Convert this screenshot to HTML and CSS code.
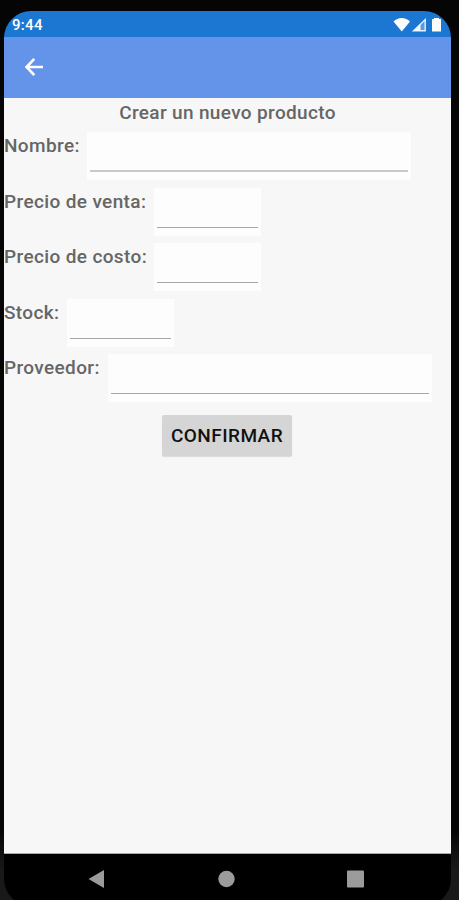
FILE: index.html
```
<!DOCTYPE html>
<html lang="es">
<head>
<meta charset="utf-8">
<title>Crear un nuevo producto</title>
<link rel="stylesheet" href="styles.css">
</head>
<body>
<div class="phone">
  <div class="status">
    <span class="clock">9:44</span>
    <svg class="status-icons" width="50" height="16" viewBox="0 0 50 16">
      <path d="M0.5 4.5 C5 -0.2 12.5 -0.2 17 4.5 L8.8 14.5 Z" fill="#fff"/>
      <path d="M32.2 2.6 V13.8 H20.6 Z" fill="#5a9ae0" stroke="#e8f2fc" stroke-width="1.4"/>
      <path d="M27.5 7 V14 H20.5 Z" fill="#f2f8ff"/>
      <path d="M41 1 h5 v1 h2 v12.5 h-9 v-12.5 h2 z" fill="#fff"/>
    </svg>
  </div>

  <div class="toolbar">
    <svg width="20" height="20" viewBox="0 0 20 20">
      <path d="M10.3 1.8 L2.5 10 L10.3 18.2 M2.5 10 H19" fill="none" stroke="#fff" stroke-width="2.6"/>
    </svg>
  </div>

  <form class="content">
    <h1>Crear un nuevo producto</h1>
    <div class="row">
      <label for="nombre" class="l-nombre">Nombre:</label>
      <div class="field long"><input id="nombre" type="text" class="thick"></div>
    </div>
    <div class="row">
      <label for="venta" class="l-precio">Precio de venta:</label>
      <div class="field"><input id="venta" type="text"></div>
    </div>
    <div class="row">
      <label for="costo" class="l-precio">Precio de costo:</label>
      <div class="field"><input id="costo" type="text"></div>
    </div>
    <div class="row">
      <label for="stock" class="l-stock">Stock:</label>
      <div class="field"><input id="stock" type="text"></div>
    </div>
    <div class="row">
      <label for="proveedor" class="l-proveedor">Proveedor:</label>
      <div class="field long"><input id="proveedor" type="text"></div>
    </div>
    <button type="button">CONFIRMAR</button>
  </form>

  <div class="navbar">
    <svg width="18" height="20" viewBox="0 0 18 20"><path d="M0.5 10 L16 1 V19 Z" fill="#9b9b9b"/></svg>
    <svg width="18" height="20" viewBox="0 0 18 20"><circle cx="9.5" cy="10" r="8.2" fill="#9b9b9b"/></svg>
    <svg width="18" height="20" viewBox="0 0 18 20"><rect x="1" y="1.5" width="17" height="17" rx="1" fill="#9b9b9b"/></svg>
  </div>
</div>
</body>
</html>
```

FILE: styles.css
```
* {
  box-sizing: border-box;
}
body {
  margin: 0;
  height: 900px;
  padding: 11px 8px 0 4px;
  overflow: hidden;
  background: linear-gradient(#050505, #050505 830px, #191919 870px);
  font-family: Roboto, "Liberation Sans", sans-serif;
}
.phone {
  display: flex;
  flex-direction: column;
  height: 895px;
  overflow: hidden;
  border-radius: 27px;
  background: #000;
}
.status {
  display: flex;
  justify-content: space-between;
  height: 26px;
  padding: 0 8px;
  background: #1c77d2;
}
.clock {
  color: #fff;
  font-size: 15px;
  font-weight: 500;
  line-height: 28px;
  letter-spacing: 0.3px;
}
.status-icons {
  margin-top: 6px;
}
.toolbar {
  display: flex;
  align-items: center;
  height: 61px;
  padding: 0 0 1px 20px;
  background: #6394e9;
}
.content {
  height: 756px;
  background: #f7f7f7;
  border-bottom: 1px solid #aaa;
}
h1 {
  margin: 0;
  height: 34px;
  color: #666;
  font-size: 19px;
  font-weight: 500;
  line-height: 29px;
  letter-spacing: 0.35px;
  text-align: center;
}
.row {
  display: flex;
  height: 55.5px;
}
label {
  color: #666;
  font-size: 19px;
  font-weight: 500;
  line-height: 27px;
  letter-spacing: 0.37px;
  white-space: nowrap;
}
.l-nombre {
  width: 83px;
}
.l-precio {
  width: 150px;
}
.l-stock {
  width: 63px;
}
.l-proveedor {
  width: 104px;
}
.field {
  width: 107px;
  height: 48px;
  padding: 0 3px;
  background: #fdfdfd;
}
.long {
  width: 324px;
}
input {
  display: block;
  width: 100%;
  height: 40px;
  padding: 0;
  border: 0;
  border-bottom: 1px solid #a8a8a8;
  background: none;
  font: 18px Roboto, sans-serif;
  outline: none;
}
.thick {
  border-bottom: 2px solid #c9c9c9;
}
button {
  display: block;
  width: 130px;
  height: 41px;
  margin: 5px auto 0 158px;
  padding: 1px 0 0;
  border: 0;
  border-radius: 2px;
  background: #d5d5d5;
  box-shadow: 0 1px 1px rgba(0, 0, 0, 0.12);
  color: #111;
  font: 500 19px Roboto, sans-serif;
  letter-spacing: 0.45px;
}
.navbar {
  display: flex;
  gap: 111px;
  padding: 15px 0 0 84px;
}
```
